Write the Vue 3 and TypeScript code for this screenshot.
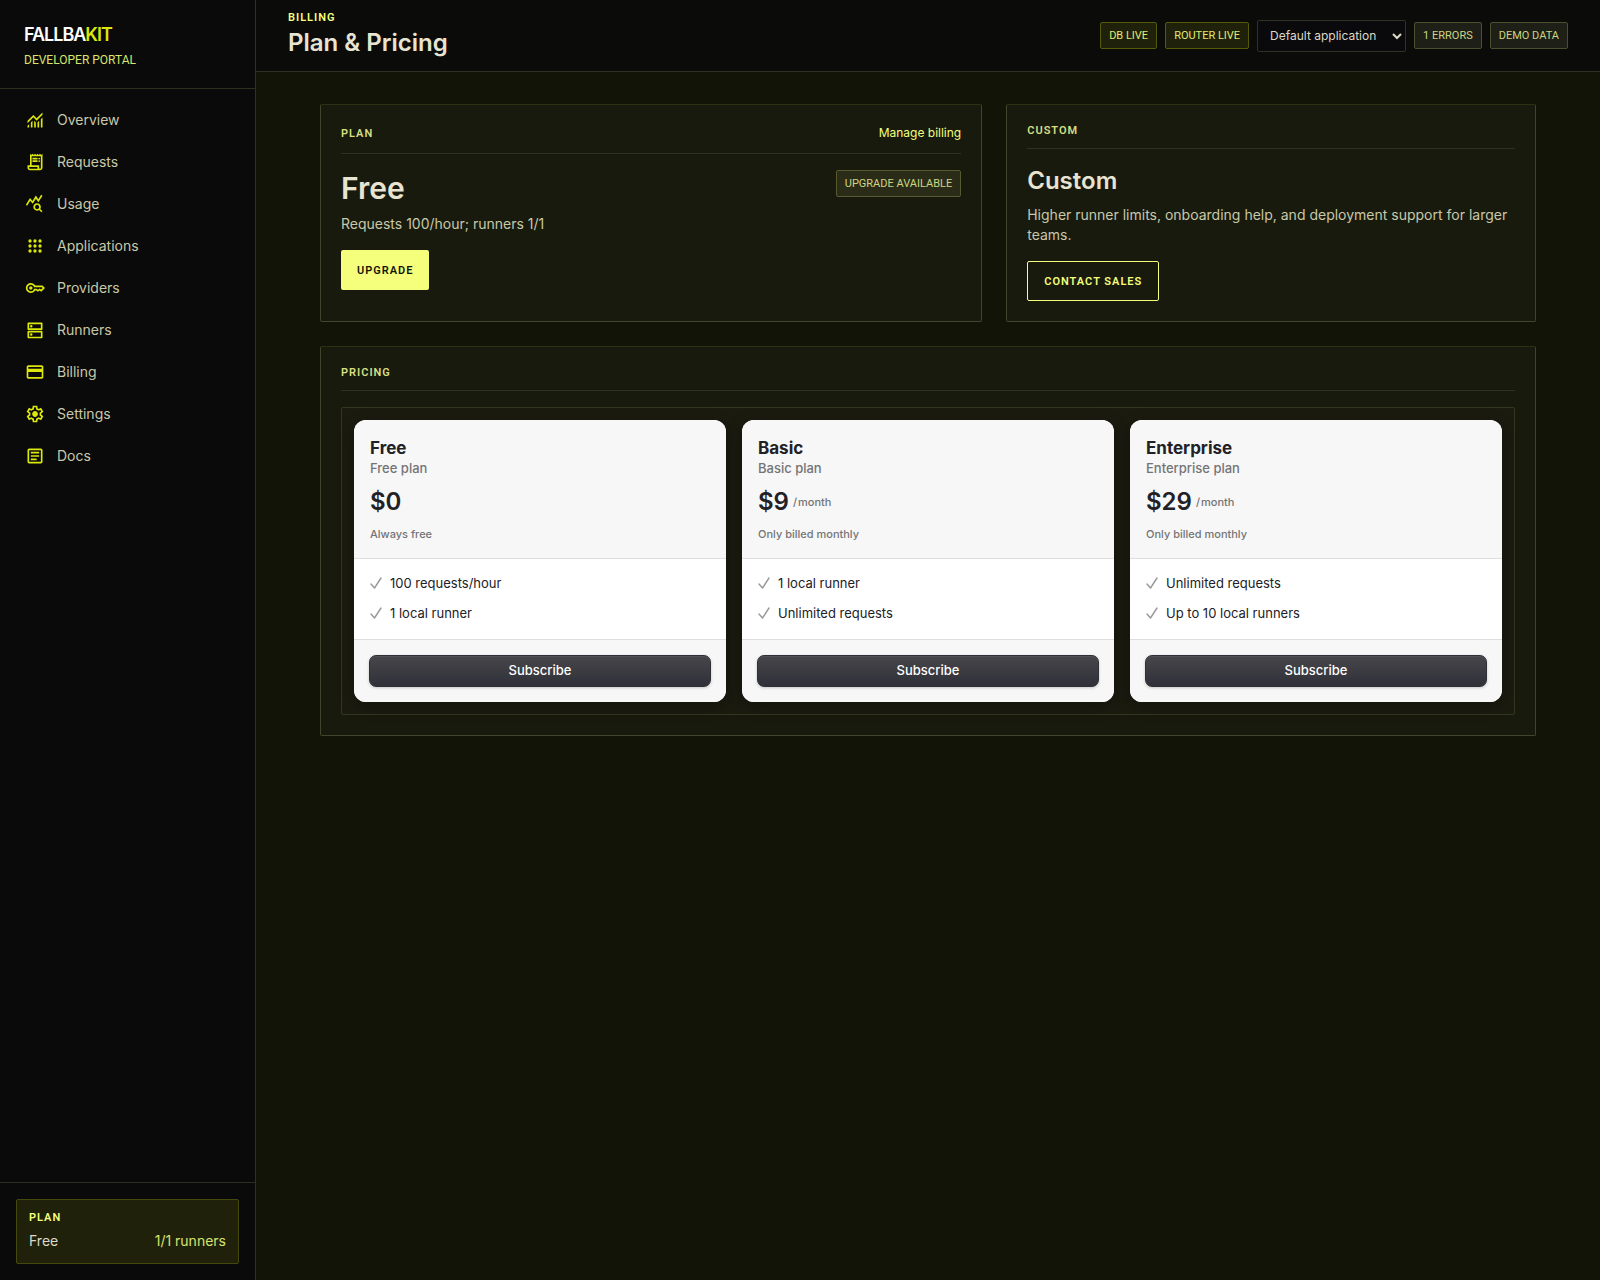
<script setup lang="ts">
interface NavItem {
  label: string
  path: string
}

interface Plan {
  name: string
  description: string
  price: string
  period?: string
  note: string
  features: string[]
}

const dot = (x: number, y: number, r: number): string =>
  `M${x - r} ${y}a${r} ${r} 0 1 0 ${r * 2} 0a${r} ${r} 0 1 0 ${-r * 2} 0Z`

const appsPath = [-720, -480, -240]
  .flatMap((y) => [240, 480, 720].map((x) => dot(x, y, 80)))
  .join('')

const navItems: NavItem[] = [
  {
    label: 'Overview',
    path: 'M120-120v-80l80-80v160h-80Zm160 0v-240l80-80v320h-80Zm160 0v-320l80 81v239h-80Zm160 0v-239l80-80v319h-80Zm160 0v-400l80-80v480h-80ZM120-327v-113l280-280 160 160 280-280v113L560-447 400-607 120-327Z',
  },
  {
    label: 'Requests',
    path: 'M240-80q-50 0-85-35t-35-85v-120h120v-560l60 60 60-60 60 60 60-60 60 60 60-60 60 60 60-60 60 60 60-60v680q0 50-35 85t-85 35H240Zm480-80q17 0 28.5-11.5T760-200v-560H320v440h360v120q0 17 11.5 28.5T720-160ZM360-600v-80h240v80H360Zm0 120v-80h240v80H360Zm320-120q-17 0-28.5-11.5T640-640q0-17 11.5-28.5T680-680q17 0 28.5 11.5T720-640q0 17-11.5 28.5T680-600Zm0 120q-17 0-28.5-11.5T640-520q0-17 11.5-28.5T680-560q17 0 28.5 11.5T720-520q0 17-11.5 28.5T680-480ZM240-160h360v-80H200v40q0 17 11.5 28.5T240-160Z',
  },
  {
    label: 'Usage',
    path: 'm105-399-65-47 200-320 120 140 160-260 120 180 135-214 65 47-198 314-119-179-152 247-121-141-145 233Zm475 159q42 0 71-29t29-71q0-42-29-71t-71-29q-42 0-71 29t-29 71q0 42 29 71t71 29ZM784-80 676-188q-21 14-45.5 21t-50.5 7q-75 0-127.5-52.5T400-340q0-75 52.5-127.5T580-520q75 0 127.5 52.5T760-340q0 26-7 50.5T732-244l108 108-56 56Z',
  },
  { label: 'Applications', path: appsPath },
  {
    label: 'Providers',
    path: 'M280-400q-33 0-56.5-23.5T200-480q0-33 23.5-56.5T280-560q33 0 56.5 23.5T360-480q0 33-23.5 56.5T280-400Zm0 160q-100 0-170-70T40-480q0-100 70-170t170-70q67 0 121.5 33t86.5 87h352l120 120-180 180-80-60-80 60-85-60h-47q-32 54-86.5 87T280-240Zm0-80q56 0 98.5-34t56.5-86h125l58 41 82-61 71 55 75-75-40-40H435q-14-52-56.5-86T280-640q-66 0-113 47t-47 113q0 66 47 113t113 47Z',
  },
  {
    label: 'Runners',
    path: `${dot(300, -660, 60)}${dot(300, -260, 60)}M160-840h640q17 0 28.5 11.5T840-800v280q0 17-11.5 28.5T800-480H160q-17 0-28.5-11.5T120-520v-280q0-17 11.5-28.5T160-840Zm40 80v200h560v-200H200ZM160-440h640q17 0 28.5 11.5T840-400v280q0 17-11.5 28.5T800-80H160q-17 0-28.5-11.5T120-120v-280q0-17 11.5-28.5T160-440Zm40 80v200h560v-200H200Z`,
  },
  {
    label: 'Billing',
    path: 'M880-720v480q0 33-23.5 56.5T800-160H160q-33 0-56.5-23.5T80-240v-480q0-33 23.5-56.5T160-800h640q33 0 56.5 23.5T880-720Zm-720 80h640v-80H160v80Zm0 160v240h640v-240H160Z',
  },
  {
    label: 'Settings',
    path: 'm370-80-16-128q-13-5-24.5-12T307-235l-119 50L78-375l103-78q-1-7-1-13.5v-27q0-6.5 1-13.5L78-585l110-190 119 50q11-8 23-15t24-12l16-128h220l16 128q13 5 24.5 12t22.5 15l119-50 110 190-103 78q1 7 1 13.5v27q0 6.5-2 13.5l103 78-110 190-118-50q-11 8-23 15t-24 12L590-80H370Zm70-80h79l14-106q31-8 57.5-23.5T639-327l99 41 39-68-86-65q5-14 7-29.5t2-31.5q0-16-2-31.5t-7-29.5l86-65-39-68-99 42q-22-23-48.5-38.5T533-694l-13-106h-79l-14 106q-31 8-57.5 23.5T321-633l-99-41-39 68 86 64q-5 15-7 30t-2 32q0 16 2 31t7 30l-86 65 39 68 99-42q22 23 48.5 38.5T427-266l13 106Zm42-180q58 0 99-41t41-99q0-58-41-99t-99-41q-59 0-99.5 41T342-480q0 58 40.5 99t99.5 41Z',
  },
  {
    label: 'Docs',
    path: 'M280-280h280v-80H280v80Zm0-160h400v-80H280v80Zm0-160h400v-80H280v80Zm-80 480q-33 0-56.5-23.5T120-200v-560q0-33 23.5-56.5T200-840h560q33 0 56.5 23.5T840-760v560q0 33-23.5 56.5T760-120H200Zm0-80h560v-560H200v560Z',
  },
]

const plans: Plan[] = [
  {
    name: 'Free',
    description: 'Free plan',
    price: '$0',
    note: 'Always free',
    features: ['100 requests/hour', '1 local runner'],
  },
  {
    name: 'Basic',
    description: 'Basic plan',
    price: '$9',
    period: 'month',
    note: 'Only billed monthly',
    features: ['1 local runner', 'Unlimited requests'],
  },
  {
    name: 'Enterprise',
    description: 'Enterprise plan',
    price: '$29',
    period: 'month',
    note: 'Only billed monthly',
    features: ['Unlimited requests', 'Up to 10 local runners'],
  },
]
</script>

<template>
  <div class="shell">
    <aside class="sidebar">
      <div class="brand">
        <div class="brand-name">FALLBA<span class="brand-accent">KIT</span></div>
        <div class="brand-sub">DEVELOPER PORTAL</div>
      </div>
      <nav class="nav" aria-label="Main">
        <a v-for="item in navItems" :key="item.label" class="nav-item" href="#">
          <svg class="nav-icon" viewBox="0 -960 960 960" aria-hidden="true">
            <path :d="item.path" />
          </svg>
          <span>{{ item.label }}</span>
        </a>
      </nav>
      <div class="sidebar-foot">
        <div class="plan-box">
          <div class="label bright">PLAN</div>
          <div class="plan-row">
            <span>Free</span>
            <span class="plan-runners">1/1 runners</span>
          </div>
        </div>
      </div>
    </aside>

    <div class="main">
      <header class="topbar">
        <div class="heading">
          <div class="label bright">BILLING</div>
          <h1>Plan &amp; Pricing</h1>
        </div>
        <div class="status">
          <span class="badge live">DB LIVE</span>
          <span class="badge live">ROUTER LIVE</span>
          <select class="app-select" aria-label="Application">
            <option>Default application</option>
          </select>
          <span class="badge">1 ERRORS</span>
          <span class="badge">DEMO DATA</span>
        </div>
      </header>

      <main class="content">
        <div class="top-grid">
          <section class="panel">
            <div class="panel-head">
              <h2 class="label">PLAN</h2>
              <a class="manage" href="#">Manage billing</a>
            </div>
            <div class="plan-body">
              <div>
                <div class="plan-name">Free</div>
                <p>Requests 100/hour; runners 1/1</p>
                <button class="btn solid" type="button">UPGRADE</button>
              </div>
              <span class="badge available">UPGRADE AVAILABLE</span>
            </div>
          </section>

          <section class="panel">
            <div class="panel-head">
              <h2 class="label">CUSTOM</h2>
            </div>
            <h3>Custom</h3>
            <p>Higher runner limits, onboarding help, and deployment support for larger teams.</p>
            <button class="btn outline" type="button">CONTACT SALES</button>
          </section>
        </div>

        <section class="panel">
          <div class="panel-head">
            <h2 class="label">PRICING</h2>
          </div>
          <div class="pricing">
            <article v-for="plan in plans" :key="plan.name" class="price-card">
              <div class="price-head">
                <h3 class="price-name">{{ plan.name }}</h3>
                <div class="price-desc">{{ plan.description }}</div>
                <div class="price-line">
                  <span class="amount">{{ plan.price }}</span>
                  <span v-if="plan.period" class="period"><span>/</span><span>{{ plan.period }}</span></span>
                </div>
                <div class="price-note">{{ plan.note }}</div>
              </div>
              <ul class="features">
                <li v-for="feature in plan.features" :key="feature">
                  <svg class="check" viewBox="0 0 12 12" aria-hidden="true">
                    <path d="M1 7l3.5 4L11 1" />
                  </svg>
                  <span>{{ feature }}</span>
                </li>
              </ul>
              <div class="price-foot">
                <button class="subscribe" type="button">Subscribe</button>
              </div>
            </article>
          </div>
        </section>
      </main>
    </div>
  </div>
</template>

<style>
body {
  margin: 0;
  background: #121408;
}
</style>

<style scoped>
* {
  box-sizing: border-box;
}

.shell {
  display: flex;
  min-height: 100vh;
  font-family: Inter, 'Liberation Sans', sans-serif;
  font-size: 14px;
  line-height: 20px;
  color: #c8c8a9;
}

h1,
h2,
h3,
p,
ul {
  margin: 0;
  padding: 0;
}

a {
  color: inherit;
  text-decoration: none;
}

.sidebar {
  display: flex;
  flex-direction: column;
  flex: none;
  width: 256px;
  border-right: 1px solid #303126;
  background: #0a0a0a;
}

.brand {
  padding: 24px 24px 20px;
  border-bottom: 1px solid #2d2f1f;
}

.brand-name {
  font-size: 18px;
  font-weight: 600;
  line-height: 22px;
  letter-spacing: -1px;
  color: #fff;
}

.brand-accent {
  color: #dce80a;
}

.brand-sub {
  margin-top: 6px;
  font-family: Roboto, sans-serif;
  font-size: 12px;
  line-height: 16px;
  color: #d8e46c;
}

.nav {
  display: flex;
  flex-direction: column;
  gap: 2px;
  padding: 11px 12px;
}

.nav-item {
  display: flex;
  align-items: center;
  gap: 12px;
  height: 40px;
  padding: 0 13px;
}

.nav-icon {
  width: 20px;
  height: 20px;
  fill: #dce80a;
}

.sidebar-foot {
  margin-top: auto;
  padding: 16px;
  border-top: 1px solid #2d2f1f;
}

.plan-box {
  padding: 12px;
  border: 1px solid #46490c;
  border-radius: 2px;
  background: #1f210b;
}

.plan-row {
  display: flex;
  justify-content: space-between;
  margin-top: 8px;
  color: #dcd9c8;
}

.plan-runners {
  color: #d8e46c;
}

.label {
  font-family: Roboto, sans-serif;
  font-size: 11px;
  font-weight: 600;
  line-height: 11px;
  letter-spacing: 1px;
  color: #d5df80;
}

.label.bright {
  color: #f5ff7b;
}

.main {
  flex: 1;
  min-width: 0;
  background: #121408;
}

.topbar {
  display: flex;
  align-items: center;
  justify-content: space-between;
  padding: 12px 32px;
  border-bottom: 1px solid #303122;
  background: #0b0b0a;
}

h1 {
  margin-top: 4px;
  font-size: 24px;
  font-weight: 600;
  line-height: 32px;
  color: #e8e4d2;
}

.status {
  display: flex;
  align-items: center;
  gap: 8px;
}

.badge {
  padding: 4px 8px;
  border: 1px solid #4b4f2c;
  border-radius: 2px;
  background: #1e1f16;
  font-family: Roboto, sans-serif;
  font-size: 11px;
  line-height: 17px;
  color: #ccd584;
  white-space: nowrap;
}

.badge.live {
  border-color: #55590a;
  background: #1f210a;
  color: #e0eb72;
}

.badge.available {
  border-color: #565a2e;
  background: #2a2c18;
}

.app-select {
  width: 149px;
  height: 32px;
  padding: 0 8px;
  border: 1px solid #303128;
  border-radius: 2px;
  background: #0a0a0c;
  font-family: inherit;
  font-size: 12px;
  color: #dcd9c8;
}

.content {
  display: flex;
  flex-direction: column;
  gap: 24px;
  padding: 32px 64px;
}

.top-grid {
  display: grid;
  grid-template-columns: 5fr 4fr;
  gap: 24px;
}

.panel {
  padding: 20px;
  border: 1px solid #42452c;
  border-top-color: #2d3012;
  border-radius: 2px;
  background: #181a0e;
}

.panel-head {
  display: flex;
  align-items: center;
  justify-content: space-between;
  margin-bottom: 16px;
  padding-bottom: 12px;
  border-bottom: 1px solid #2f3122;
}

.manage {
  font-size: 12px;
  line-height: 16px;
  color: #f5ff7b;
}

.plan-body {
  display: flex;
  align-items: flex-start;
  justify-content: space-between;
}

.plan-name {
  font-size: 30px;
  font-weight: 600;
  line-height: 36px;
  color: #e8e4d2;
}

.panel h3 {
  font-weight: 600;
}

.panel > h3 {
  font-size: 24px;
  line-height: 32px;
  color: #e8e4d2;
}

.panel p {
  margin: 8px 0 16px;
}

.btn {
  height: 40px;
  padding: 0 16px;
  border: 0;
  border-radius: 2px;
  font-family: Roboto, sans-serif;
  font-size: 11px;
  font-weight: 600;
  letter-spacing: 1px;
}

.btn.solid {
  background: #f5ff7b;
  color: #121408;
}

.btn.outline {
  border: 1px solid #f5ff7b;
  background: transparent;
  color: #f5ff7b;
}

.pricing {
  display: grid;
  grid-template-columns: repeat(3, 1fr);
  gap: 16px;
  padding: 12px;
  border: 1px solid #34361f;
  border-radius: 2px;
  background: #1c1b10;
}

.price-card {
  overflow: hidden;
  border-radius: 12px;
  background: #fff;
  box-shadow: 0 4px 16px rgba(0, 0, 0, 0.3);
  font-size: 13px;
  line-height: 18px;
  color: #212126;
}

.price-head {
  padding: 16px;
  border-bottom: 1px solid #dedede;
  background: #f7f7f7;
}

.price-name {
  font-size: 17px;
  line-height: 24px;
}

.panel .price-name {
  font-weight: 700;
}

.price-desc {
  font-weight: 500;
  line-height: 16px;
}

.price-desc,
.price-note,
.period {
  color: #747476;
}

.price-line {
  display: flex;
  align-items: center;
  gap: 4px;
  margin: 10px 0 8px;
}

.amount {
  font-size: 24px;
  font-weight: 600;
  line-height: 32px;
}

.period,
.price-note {
  font-size: 11px;
  font-weight: 500;
  line-height: 16px;
}

.period {
  display: flex;
  gap: 1px;
}

.features {
  display: flex;
  flex-direction: column;
  gap: 12px;
  padding: 15px 16px 17px;
  list-style: none;
}

.features li {
  display: flex;
  align-items: center;
  gap: 8px;
}

.check {
  width: 12px;
  height: 12px;
  fill: none;
  stroke: #98989a;
  stroke-width: 1.4;
  stroke-linecap: round;
  stroke-linejoin: round;
}

.price-foot {
  padding: 15px;
  border-top: 1px solid #dedede;
  background: #f7f7f7;
}

.subscribe {
  display: block;
  width: 100%;
  height: 32px;
  padding: 0 12px 2px;
  border: 1px solid #2f3037;
  border-radius: 7px;
  background: linear-gradient(#47474b, #2f2f38) border-box;
  box-shadow:
    inset 0 1px 0 rgba(255, 255, 255, 0.07),
    0 1px 3px rgba(0, 0, 0, 0.2);
  font-family: inherit;
  font-size: 13px;
  font-weight: 500;
  line-height: 18px;
  color: #fff;
}
</style>
